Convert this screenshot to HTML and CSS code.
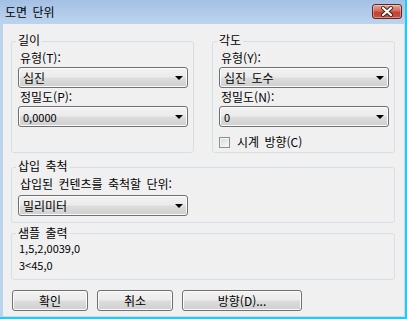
FILE: index.html
```html
<!DOCTYPE html>
<html lang="ko">
<head>
  <meta charset="UTF-8">
  <title>도면 단위</title>
  <link rel="stylesheet" href="styles.css">
</head>
<body>

<div class="window">
  <div class="titlebar">
    <span class="title">도면 단위</span>
    <div class="close">
      <svg width="28" height="13" viewBox="0 0 28 13">
        <path d="M10 3 L18 10 M18 3 L10 10" stroke="#3b1f1c" stroke-width="4" stroke-linecap="round"/>
        <path d="M10 3 L18 10 M18 3 L10 10" stroke="#ffffff" stroke-width="2.2" stroke-linecap="round"/>
      </svg>
    </div>
  </div>

  <div class="content">
    <div class="row">
      <fieldset class="group">
        <legend>길이</legend>
        <div class="field-label">유형(T):</div>
        <div class="combo"><span>십진</span><i class="arrow"></i></div>
        <div class="field-label">정밀도(P):</div>
        <div class="combo"><span class="num">0,0000</span><i class="arrow"></i></div>
      </fieldset>
      <fieldset class="group">
        <legend>각도</legend>
        <div class="field-label">유형(Y):</div>
        <div class="combo"><span>십진 도수</span><i class="arrow"></i></div>
        <div class="field-label">정밀도(N):</div>
        <div class="combo"><span class="num">0</span><i class="arrow"></i></div>
        <label class="check"><span class="box"></span>시계 방향(C)</label>
      </fieldset>
    </div>

    <fieldset class="group scale">
      <legend>삽입 축척</legend>
      <div class="field-label">삽입된 컨텐츠를 축척할 단위:</div>
      <div class="combo"><span>밀리미터</span><i class="arrow"></i></div>
    </fieldset>

    <fieldset class="group sample">
      <legend>샘플 출력</legend>
      <div class="sample-lines num">
        <div>1,5,2,0039,0</div>
        <div class="second">3&lt;45,0</div>
      </div>
    </fieldset>

    <div class="buttons">
      <button class="btn">확인</button>
      <button class="btn">취소</button>
      <button class="btn wide">방향(D)...</button>
    </div>
  </div>
</div>

</body>
</html>
```

FILE: styles.css
```css
* { box-sizing: border-box; }
body {
  margin: 0;
  font-family: "Noto Sans CJK KR", "Liberation Sans", sans-serif;
  font-size: 12px;
  word-spacing: 2px;
  color: #000;
}
.num { font-size: 11px; }
.window {
  width: 407px;
  height: 319px;
  display: flex;
  flex-direction: column;
  background: #bcd3ec;
  border-right: 2px solid #2fc6e8;
  border-bottom: 2px solid #2fc6e8;
}
.titlebar {
  height: 24px;
  display: flex;
  justify-content: space-between;
  align-items: flex-start;
  padding: 0 3px 0 5px;
  background: linear-gradient(#a3c0e4, #bdd4ee);
}
.title {
  line-height: 24px;
  font-size: 12px;
}
.close {
  margin-top: 4px;
  width: 30px;
  height: 15px;
  border: 1px solid #5e2722;
  border-radius: 3px;
  background: linear-gradient(#e6a497, #d26c5c 45%, #c2422f 55%, #c85440);
  box-shadow: inset 0 0 0 1px rgba(255,255,255,0.35);
  display: flex;
  align-items: center;
  justify-content: center;
}
.close svg { display: block; }
.content {
  flex: 1;
  margin-left: 3px;
  background: #f0f0f0;
  border-right: 1px solid #d6d6d6;
  border-bottom: 1px solid #d6d6d6;
  padding: 9px 9px 0 8px;
}
.row {
  display: flex;
  gap: 18px;
}
.row .group { width: 183px; }
.group {
  margin: 0;
  min-width: 0;
  border: 1px solid #d5dfe5;
  border-radius: 3px;
  padding: 2px 5px 3px 6px;
}
.group legend {
  padding: 0 2px 2px;
  margin-left: -2px;
  line-height: 14px;
}
.field-label {
  line-height: 14px;
  padding-left: 2px;
}
.combo + .field-label { margin-top: 2px; }
.combo {
  margin-top: 2px;
  width: 170px;
  height: 21px;
  border: 1px solid #707070;
  border-radius: 3px;
  background: linear-gradient(#f2f2f2, #ebebeb 48%, #dddddd 52%, #cfcfcf);
  box-shadow: inset 0 0 0 1px #fbfbfb;
  display: flex;
  align-items: center;
  justify-content: space-between;
  padding: 0 4px 0 4px;
  line-height: 14px;
}
.arrow {
  width: 0;
  height: 0;
  border-left: 4px solid transparent;
  border-right: 4px solid transparent;
  border-top: 4px solid #000;
}
.check {
  display: flex;
  align-items: center;
  margin-top: 8px;
  line-height: 14px;
}
.check .box {
  width: 11px;
  height: 11px;
  border: 1px solid #8e8f8f;
  background: linear-gradient(135deg, #d8d8d8, #fafafa);
  box-shadow: inset 0 0 0 1px #f4f4f4;
  margin-right: 7px;
}
.scale {
  margin-top: 6px;
  padding-bottom: 6px;
}
.scale .combo { margin-top: 4px; }
.sample {
  margin-top: 3px;
  padding-top: 1px;
  padding-bottom: 7px;
}
.sample legend { padding-bottom: 0; }
.sample-lines {
  padding-left: 1px;
  line-height: 14px;
}
.sample-lines .second { margin-top: 3px; }
.buttons {
  display: flex;
  gap: 9px;
  margin-top: 10px;
  padding-left: 1px;
}
.btn {
  width: 76px;
  height: 21px;
  padding: 0;
  font: inherit;
  color: #000;
  border: 1px solid #707070;
  border-radius: 3px;
  background: linear-gradient(#f2f2f2, #ebebeb 48%, #dddddd 52%, #cfcfcf);
  box-shadow: inset 0 0 0 1px #fbfbfb;
}
.btn.wide { width: 120px; }
```
